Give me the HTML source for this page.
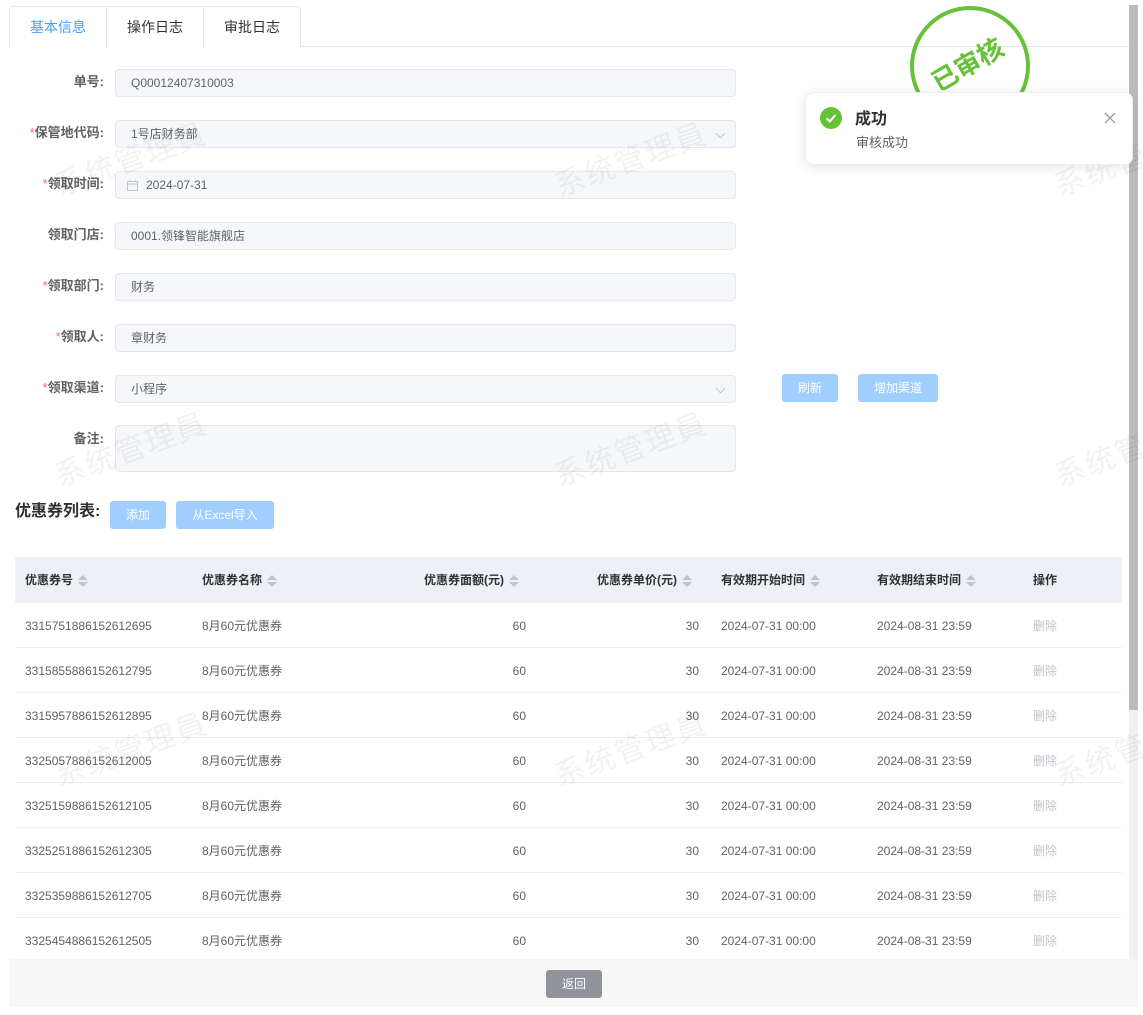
<!DOCTYPE html>
<html><head><meta charset="utf-8"><style>
*{box-sizing:border-box;margin:0;padding:0}
body{width:1143px;height:1015px;overflow:hidden;background:#fff;font-family:"Liberation Sans","Noto Sans CJK SC",sans-serif;position:relative;color:#606266}
.a{position:absolute}
.tab{position:absolute;top:6px;height:41px;border:1px solid #e4e7ed;border-bottom:none;font-size:14px;color:#303133;text-align:center;line-height:40px;background:#fff}
.lbl{position:absolute;right:1039px;font-size:13px;font-weight:bold;color:#606266;white-space:nowrap;line-height:16px}
.lbl i{color:#f56c6c;font-style:normal;font-weight:normal}
.inp{position:absolute;left:115px;width:621px;height:28px;background:#f5f7fa;border:1px solid #e4e7ed;border-radius:4px;font-size:12px;color:#606266;line-height:26px;padding-left:15px}
.chev{position:absolute;right:11px;top:9px;width:7px;height:7px;border-right:1px solid #c0c4cc;border-bottom:1px solid #c0c4cc;transform:rotate(45deg)}
.btn{position:absolute;background:#a0cfff;color:#fff;font-size:12px;border-radius:3px;text-align:center;line-height:28px;height:28px}
.wm{position:absolute;font-size:30px;color:rgba(0,0,0,0.05);transform:rotate(-20deg);white-space:nowrap;letter-spacing:2px;z-index:5}
.th{position:absolute;font-size:12px;font-weight:bold;color:#303133;top:572px;white-space:nowrap;line-height:16px}
.s{display:inline-block;width:10px;height:14px;vertical-align:middle;margin-left:5px;position:relative}
.s:before{content:"";position:absolute;left:0;top:1px;border:5px solid transparent;border-top:none;border-bottom:5px solid #c0c4cc}
.s:after{content:"";position:absolute;left:0;top:8px;border:5px solid transparent;border-bottom:none;border-top:5px solid #c0c4cc}
.row{position:absolute;left:15px;width:1107px;height:45px;border-bottom:1px solid #ebeef5;font-size:12px;color:#606266}
.row span{position:absolute;top:15px;white-space:nowrap;line-height:16px;height:16px}
</style></head><body>

<div class="a" style="left:9px;top:46px;width:1120px;height:1px;background:#e4e7ed"></div>
<div class="tab" style="left:9px;width:98px;color:#409eff;height:42px;border-top-left-radius:4px">基本信息</div>
<div class="tab" style="left:106px;width:98px">操作日志</div>
<div class="tab" style="left:203px;width:98px;border-top-right-radius:4px">审批日志</div>

<div class="lbl" style="top:74px">单号:</div>
<div class="inp" style="top:69px">Q00012407310003</div>
<div class="lbl" style="top:125px"><i>*</i>保管地代码:</div>
<div class="inp" style="top:120px">1号店财务部<div class="chev"></div></div>
<div class="lbl" style="top:176px"><i>*</i>领取时间:</div>
<div class="inp" style="top:171px;padding-left:30px"><svg class="a" style="left:11px;top:8px" width="11" height="11" viewBox="0 0 11 11"><rect x="0.5" y="1.5" width="10" height="9" fill="none" stroke="#c0c4cc"/><line x1="0.5" y1="4" x2="10.5" y2="4" stroke="#c0c4cc"/><line x1="3" y1="0" x2="3" y2="2" stroke="#c0c4cc"/><line x1="8" y1="0" x2="8" y2="2" stroke="#c0c4cc"/></svg>2024-07-31</div>
<div class="lbl" style="top:227px">领取门店:</div>
<div class="inp" style="top:222px">0001.领锋智能旗舰店</div>
<div class="lbl" style="top:278px"><i>*</i>领取部门:</div>
<div class="inp" style="top:273px">财务</div>
<div class="lbl" style="top:329px"><i>*</i>领取人:</div>
<div class="inp" style="top:324px">章财务</div>
<div class="lbl" style="top:380px"><i>*</i>领取渠道:</div>
<div class="inp" style="top:375px">小程序<div class="chev"></div></div>
<div class="btn" style="left:782px;top:374px;width:56px">刷新</div>
<div class="btn" style="left:858px;top:374px;width:80px">增加渠道</div>
<div class="lbl" style="top:431px">备注:</div>
<div class="inp" style="top:425px;height:47px"></div>

<div class="a" style="left:15px;top:502px;font-size:16px;font-weight:bold;color:#303133;line-height:20px">优惠券列表:</div>
<div class="btn" style="left:110px;top:501px;width:56px">添加</div>
<div class="btn" style="left:176px;top:501px;width:98px">从Excel导入</div>

<div class="a" style="left:15px;top:557px;width:1107px;height:46px;background:#edf0f5;border-bottom:1px solid #ebeef5"></div>
<div class="th" style="left:25px">优惠券号<span class="s"></span></div>
<div class="th" style="left:202px">优惠券名称<span class="s"></span></div>
<div class="th" style="left:424px">优惠券面额(元)<span class="s"></span></div>
<div class="th" style="left:597px">优惠券单价(元)<span class="s"></span></div>
<div class="th" style="left:721px">有效期开始时间<span class="s"></span></div>
<div class="th" style="left:877px">有效期结束时间<span class="s"></span></div>
<div class="th" style="left:1033px">操作</div>

<div class="row" style="top:603px"><span style="left:10px">3315751886152612695</span><span style="left:187px">8月60元优惠券</span><span style="right:596px">60</span><span style="right:423px">30</span><span style="left:706px">2024-07-31 00:00</span><span style="left:862px">2024-08-31 23:59</span><span style="left:1018px;color:#c0c4cc">删除</span></div>
<div class="row" style="top:648px"><span style="left:10px">3315855886152612795</span><span style="left:187px">8月60元优惠券</span><span style="right:596px">60</span><span style="right:423px">30</span><span style="left:706px">2024-07-31 00:00</span><span style="left:862px">2024-08-31 23:59</span><span style="left:1018px;color:#c0c4cc">删除</span></div>
<div class="row" style="top:693px"><span style="left:10px">3315957886152612895</span><span style="left:187px">8月60元优惠券</span><span style="right:596px">60</span><span style="right:423px">30</span><span style="left:706px">2024-07-31 00:00</span><span style="left:862px">2024-08-31 23:59</span><span style="left:1018px;color:#c0c4cc">删除</span></div>
<div class="row" style="top:738px"><span style="left:10px">3325057886152612005</span><span style="left:187px">8月60元优惠券</span><span style="right:596px">60</span><span style="right:423px">30</span><span style="left:706px">2024-07-31 00:00</span><span style="left:862px">2024-08-31 23:59</span><span style="left:1018px;color:#c0c4cc">删除</span></div>
<div class="row" style="top:783px"><span style="left:10px">3325159886152612105</span><span style="left:187px">8月60元优惠券</span><span style="right:596px">60</span><span style="right:423px">30</span><span style="left:706px">2024-07-31 00:00</span><span style="left:862px">2024-08-31 23:59</span><span style="left:1018px;color:#c0c4cc">删除</span></div>
<div class="row" style="top:828px"><span style="left:10px">3325251886152612305</span><span style="left:187px">8月60元优惠券</span><span style="right:596px">60</span><span style="right:423px">30</span><span style="left:706px">2024-07-31 00:00</span><span style="left:862px">2024-08-31 23:59</span><span style="left:1018px;color:#c0c4cc">删除</span></div>
<div class="row" style="top:873px"><span style="left:10px">3325359886152612705</span><span style="left:187px">8月60元优惠券</span><span style="right:596px">60</span><span style="right:423px">30</span><span style="left:706px">2024-07-31 00:00</span><span style="left:862px">2024-08-31 23:59</span><span style="left:1018px;color:#c0c4cc">删除</span></div>
<div class="row" style="top:918px;border-bottom:none"><span style="left:10px">3325454886152612505</span><span style="left:187px">8月60元优惠券</span><span style="right:596px">60</span><span style="right:423px">30</span><span style="left:706px">2024-07-31 00:00</span><span style="left:862px">2024-08-31 23:59</span><span style="left:1018px;color:#c0c4cc">删除</span></div>

<div class="a" style="left:9px;top:959px;width:1129px;height:48px;background:#f7f7f7"></div>
<div class="a" style="left:546px;top:970px;width:56px;height:28px;background:#909399;border-radius:3px;color:#fff;font-size:12px;text-align:center;line-height:28px">返回</div>

<div class="a" style="left:1129px;top:5px;width:9px;height:954px;background:#f1f1f1"></div>
<div class="a" style="left:1129px;top:5px;width:9px;height:705px;background:#bcbcbc"></div>

<div class="wm" style="left:50px;top:135px">系统管理員</div>
<div class="wm" style="left:550px;top:135px">系统管理員</div>
<div class="wm" style="left:1050px;top:135px">系统管理員</div>
<div class="wm" style="left:50px;top:425px">系统管理員</div>
<div class="wm" style="left:550px;top:425px">系统管理員</div>
<div class="wm" style="left:1050px;top:425px">系统管理員</div>
<div class="wm" style="left:50px;top:725px">系统管理員</div>
<div class="wm" style="left:550px;top:725px">系统管理員</div>
<div class="wm" style="left:1050px;top:725px">系统管理員</div>

<div class="a" style="left:910px;top:6px;width:120px;height:120px;border:4px solid #67c23a;border-radius:50%;z-index:6"></div>
<div class="a" style="left:928px;top:45px;font-size:26px;font-weight:bold;color:#67c23a;transform:rotate(-30deg);white-space:nowrap;z-index:6">已审核</div>

<div class="a" style="left:805px;top:92px;width:328px;height:73px;background:#fff;border:1px solid #ebeef5;border-radius:8px;box-shadow:0 2px 12px rgba(0,0,0,0.1);z-index:7">
<div class="a" style="left:14px;top:14px;width:22px;height:22px;border-radius:50%;background:#67c23a"></div>
<svg class="a" style="left:14px;top:14px" width="22" height="22" viewBox="0 0 22 22"><path d="M6.5 11.3 L9.8 14.3 L15.5 8" fill="none" stroke="#fff" stroke-width="2"/></svg>
<div class="a" style="left:49px;top:12px;font-size:16px;font-weight:bold;color:#303133">成功</div>
<div class="a" style="left:50px;top:39px;font-size:13px;color:#606266">审核成功</div>
<svg class="a" style="left:298px;top:19px" width="12" height="12" viewBox="0 0 12 12"><path d="M1 1L11 11M11 1L1 11" stroke="#909399" stroke-width="1.2"/></svg>
</div>
</body></html>
